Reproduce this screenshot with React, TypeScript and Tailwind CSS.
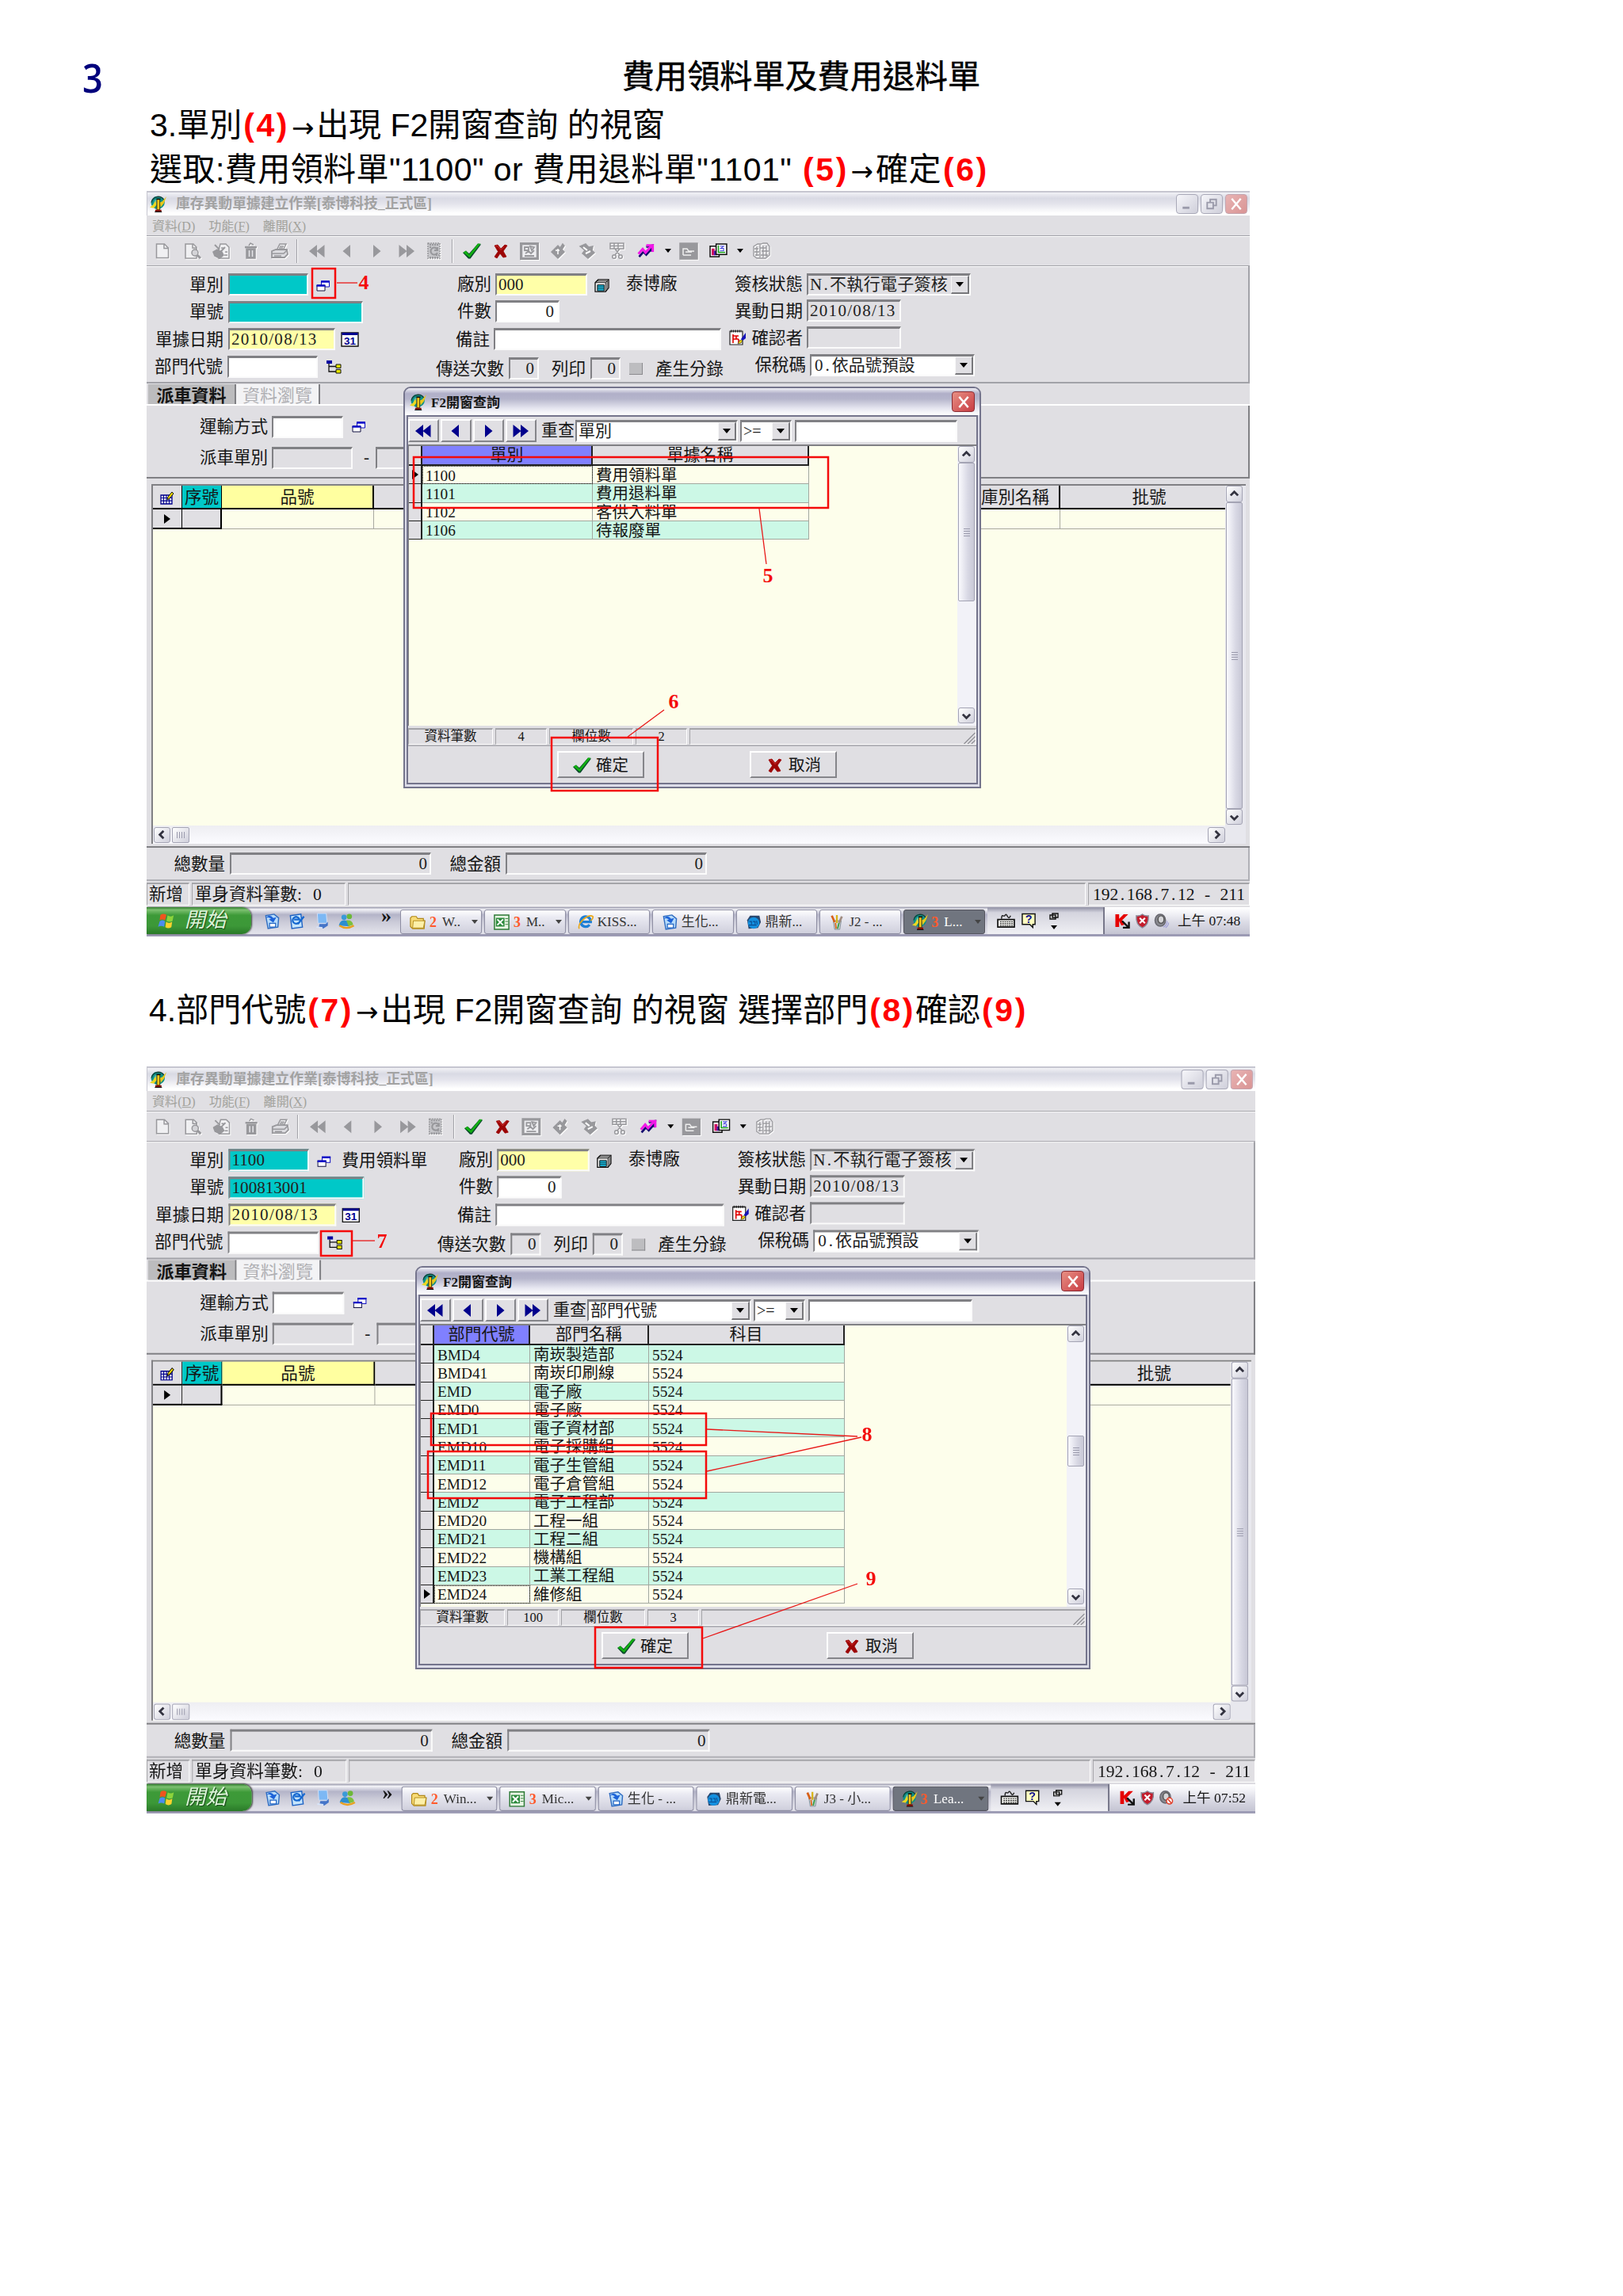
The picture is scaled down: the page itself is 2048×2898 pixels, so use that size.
import React from 'react';
import clsx from 'clsx';

type Row = string[];

const deptRows: Row[] = [
  ['BMD4', '南崁製造部', '5524'],
  ['BMD41', '南崁印刷線', '5524'],
  ['EMD', '電子廠', '5524'],
  ['EMD0', '電子廠', '5524'],
  ['EMD1', '電子資材部', '5524'],
  ['EMD10', '電子採購組', '5524'],
  ['EMD11', '電子生管組', '5524'],
  ['EMD12', '電子倉管組', '5524'],
  ['EMD2', '電子工程部', '5524'],
  ['EMD20', '工程一組', '5524'],
  ['EMD21', '工程二組', '5524'],
  ['EMD22', '機構組', '5524'],
  ['EMD23', '工業工程組', '5524'],
  ['EMD24', '維修組', '5524'],
];

const typeRows: Row[] = [
  ['1100', '費用領料單'],
  ['1101', '費用退料單'],
  ['1102', '客供入料單'],
  ['1106', '待報廢單'],
];

/* ---------- icons ---------- */

function AppIcon({ className = 'h-[21px] w-[21px]' }: { className?: string }) {
  return (
    <svg viewBox="0 0 20 20" preserveAspectRatio="none" className={clsx('shrink-0', className)}>
      <path d="M10 1q6 0 7.500 5T15 14l-3 2H7l-4-3Q0 8 3 4t7-3z" fill="#0f8f86" />
      <path d="M2 8q1-6 8-7 5 0 7 4" fill="none" stroke="#123c34" strokeWidth="1.200" />
      <path d="M6 5l4-1 1 3-4 5-3-1z" fill="#48b8b0" />
      <path d="M0 14l4-3 3-5 1 5-3 4z" fill="#ecd820" />
      <path d="M12 8l3-1 5-6-3 8-4 5z" fill="#e8c81c" />
      <path d="M8.500 4.500h3.500V17H8.500z" fill="#f4c818" stroke="#3a2a08" strokeWidth=".8" />
      <path d="M8 4h5" stroke="#111" strokeWidth="1.400" />
      <path d="M6.500 18h7.500" stroke="#801008" strokeWidth="2.200" />
      <path d="M6 19.500h8.500" stroke="#111" strokeWidth="1" />
    </svg>
  );
}

function LookupIcon() {
  return (
    <svg viewBox="0 0 18 14" className="h-[14px] w-[18px] shrink-0">
      <path d="M6.500 1h10v7h-10z" fill="#fff" stroke="#1010c0" strokeWidth="1" />
      <path d="M6 1.500h11" stroke="#0000c8" strokeWidth="2.400" />
      <path d="M1 6h10v7H1z" fill="#fff" stroke="#101040" strokeWidth="1" />
      <path d="M.5 6.500h11" stroke="#0000c8" strokeWidth="2.400" />
    </svg>
  );
}

function CalendarIcon() {
  return (
    <svg viewBox="0 0 23 19" className="h-[19px] w-[23px] shrink-0">
      <path d="M1 1h21v17H1z" fill="#fff" stroke="#111" strokeWidth="1.400" />
      <path d="M1.500 2.500h20" stroke="#000090" strokeWidth="3" />
      <text x="11.500" y="15.500" textAnchor="middle" fontSize="13.500" fontWeight="700" fill="#000090" fontFamily="Liberation Sans">31</text>
    </svg>
  );
}

function TreeIcon() {
  return (
    <svg viewBox="0 0 20 18" className="h-[18px] w-[20px] shrink-0">
      <path d="M4 5v10h9M4 8.500h9" fill="none" stroke="#111" strokeWidth="1.300" />
      <path d="M1 1h7v4H1z" fill="#0000a0" />
      <path d="M13 6h6v4.500h-6zM13 12.500h6V17h-6z" fill="#e6e600" stroke="#111" strokeWidth="1" />
    </svg>
  );
}

function BoxIcon() {
  return (
    <svg viewBox="0 0 21 18" className="h-[17px] w-[20px] shrink-0">
      <path d="M1 5l4-4h14v11l-4 5H1z" fill="#f4f4f4" stroke="#111" strokeWidth="1.400" />
      <path d="M1 5h14v12M15 5l4-4M3 3h14M17 3v11" fill="none" stroke="#111" strokeWidth="1" />
      <path d="M4 8h9v8H4z" fill="#17b3d6" stroke="#111" strokeWidth="1" />
      <path d="M4 10.500h9M4 13h9" stroke="#111" strokeWidth=".6" />
    </svg>
  );
}

function NoteIcon() {
  return (
    <svg viewBox="0 0 22 20" className="h-[20px] w-[22px] shrink-0">
      <path d="M1 2h16v17H1z" fill="#fff" stroke="#222" strokeWidth="1.200" />
      <path d="M2 2h14" stroke="#222" strokeWidth="3" strokeDasharray="1.5 1.2" />
      <path d="M5 6v11M5 8h7M5 12h7M9 8v4M12 12v5" fill="none" stroke="#e00000" strokeWidth="1.600" />
      <path d="M11 18l2-4 5-2-3 5z" fill="#f5d800" stroke="#222" strokeWidth=".6" />
      <path d="M15 12l6-8v7l-4 3z" fill="#1414b8" />
    </svg>
  );
}

function GridIcon() {
  return (
    <svg viewBox="0 0 18 17" className="h-[17px] w-[18px]">
      <path d="M1 5h14v11H1z" fill="#fff" stroke="#00008c" strokeWidth="1.300" />
      <path d="M1 8.500h14M1 12.200h14M4.500 5v11M8 5v11M11.500 5v11" stroke="#00008c" strokeWidth="1.200" />
      <path d="M9 11l1-4 5-6 2 2-5 6z" fill="#ffe000" stroke="#111" strokeWidth="1" />
    </svg>
  );
}

function CheckIcon() {
  return (
    <svg viewBox="0 0 23 20" className="h-[20px] w-[23px] shrink-0">
      <path d="M0 12l4-2.500L8 13 19 .5l4 1L9.500 19.500H7z" fill="#0a4a2c" />
      <path d="M.5 11.500l3.500-2L8 14.500 19 .5h3.500L8.500 18z" fill="#12b012" />
    </svg>
  );
}

function CrossIcon() {
  return (
    <svg viewBox="0 0 18 18" className="h-[18px] w-[18px] shrink-0">
      <path d="M1 2l4-1 4 5 5-5 3 1-5 7 4 7-4 1-4-5-4 6-3-2 4.500-6.500z" fill="#9c0505" stroke="#9c0505" strokeWidth=".8" />
      <path d="M2.500 3l2-.5 4.500 5 4-4" fill="none" stroke="#d83a3a" strokeWidth=".8" />
    </svg>
  );
}

function Arrow({ dir, double, className }: { dir: 'left' | 'right'; double?: boolean; className: string }) {
  return (
    <svg viewBox="0 0 22 18" className={clsx('h-[18px] w-[22px]', dir === 'right' && 'rotate-180', className)}>
      {double ? <path d="M11 1v16L1 9zM20.500 1v16L10.500 9z" fill="currentColor" /> : <path d="M15 1v16L5.500 9z" fill="currentColor" />}
    </svg>
  );
}

function Gray({ children }: { children: React.ReactNode }) {
  return (
    <svg viewBox="0 0 24 22" className="h-[22px] w-[24px] drop-shadow-[1px_1px_0_#fff]" fill="none" stroke="#98989c" strokeWidth="1.500">
      {children}
    </svg>
  );
}

function Caret() {
  return <span className="inline-block border-x-[4px] border-t-[5px] border-x-transparent border-t-black" />;
}

/* ---------- main window parts ---------- */

function Slot({ w, children }: { w: string; children: React.ReactNode }) {
  return <div className={clsx('flex shrink-0 items-center justify-center', w)}>{children}</div>;
}

function Divider() {
  return <div className="h-[30px] w-[2px] shrink-0 border-l border-[#a0a0a6] border-r-white border-r" />;
}

function Toolbar() {
  return (
    <div className="flex h-[38px] items-center border-b border-[#a2a2a8] pl-[1px] shadow-[0_1px_0_#fff]">
      <Slot w="w-[38px]">
        <Gray><path d="M4.500 2h10l5 5v12.500h-15zM14 2v5.500h5" fill="#f0f0f2" /></Gray>
      </Slot>
      <Slot w="w-[37px]">
        <Gray>
          <path d="M3 2h10l4 4v14H3z" fill="#f0f0f2" />
          <path d="M12 2v5h5" />
          <circle cx="15" cy="13" r="4" fill="#d4d4d8" />
          <path d="M18 16l4 4" strokeWidth="3" />
        </Gray>
      </Slot>
      <Slot w="w-[37px]">
        <Gray>
          <path d="M10 2h7l4 4v14H8V9z" fill="#f0f0f2" />
          <path d="M3 3l6 6M16 6l-8 8" strokeWidth="2" />
          <path d="M1 12l5-3 6 3 2 4-5 4-6-3z" fill="#98989c" />
          <path d="M5 12l5 3M11 7h3M16 12h3M15 16h4" stroke="#98989c" />
        </Gray>
      </Slot>
      <Slot w="w-[36px]">
        <Gray>
          <path d="M7 8h11v12H7z" fill="#98989c" />
          <path d="M5 6h15" strokeWidth="2.500" />
          <path d="M10 4l2-3 4 2" strokeWidth="1.500" />
          <path d="M10.500 10v8M14.500 10v8" stroke="#e6e6ea" />
        </Gray>
      </Slot>
      <Slot w="w-[37px]">
        <Gray>
          <path d="M8 10l4-8h8l-4 8z" fill="#f0f0f2" />
          <path d="M2 11l5-2h14l1 6-4 4H2z" fill="#dcdce0" strokeWidth="1.800" />
          <path d="M2 14h15l4-4M5 17h9M12 5h5M11 7h5" />
        </Gray>
      </Slot>
      <Slot w="w-[8px]"><Divider /></Slot>
      <Slot w="w-[42px]"><Arrow dir="left" double className="text-[#98989c]" /></Slot>
      <Slot w="w-[33px]"><Arrow dir="left" className="text-[#98989c]" /></Slot>
      <Slot w="w-[42px]"><Arrow dir="right" className="text-[#98989c]" /></Slot>
      <Slot w="w-[34px]"><Arrow dir="right" double className="text-[#98989c]" /></Slot>
      <Slot w="w-[36px]">
        <Gray><path d="M4 1h15v19H4z" fill="#c6c6ca" strokeDasharray="2 1" /><path d="M16 9a4.500 4.500 0 1 0 0 4M16 6v4h-4" strokeWidth="2.200" /><path d="M6 3h11M6 19h11M6 6h3M14 16h4" strokeWidth="2" strokeDasharray="2 1" /></Gray>
      </Slot>
      <Slot w="w-[10px]"><Divider /></Slot>
      <Slot w="w-[39px]"><CheckIcon /></Slot>
      <Slot w="w-[33px]"><CrossIcon /></Slot>
      <Slot w="w-[39px]">
        <Gray><path d="M1.500 1.500h21v19h-21z" fill="#ededf0" strokeWidth="3.500" /><path d="M6 6h5v4H6zM13 5l5 1-3 4zM7 14l4-3 3 3 4-4M6 17h12" strokeWidth="1.800" /></Gray>
      </Slot>
      <Slot w="w-[35px]">
        <Gray><path d="M3 12l8-8 8 8-8 8zM14 7l3-5 2 2-3 5" fill="#98989c" /><path d="M8 10h5M11 8v7" stroke="#fff" /></Gray>
      </Slot>
      <Slot w="w-[37px]">
        <Gray><path d="M3 5l7-3 4 4 5-1-1 5 3 3-8 7-7-6 3-4z" fill="#98989c" /><path d="M7 6l5 4M10 14l6-3" stroke="#fff" strokeWidth="2" /></Gray>
      </Slot>
      <Slot w="w-[38px]">
        <Gray><path d="M4 1h17v7H4zM4 4.500h17M9 1v7M14 1v7M10 8l6 8M16 8l-6 8" /><circle cx="9" cy="18" r="2.300" /><circle cx="17" cy="18" r="2.300" /></Gray>
      </Slot>
      <Slot w="w-[37px]">
        <svg viewBox="0 0 24 20" className="h-[18px] w-[23px]">
          <path d="M2 18l6-7 4 4 9-10M12 4l9-2-1 9" fill="none" stroke="#140a6e" strokeWidth="3" />
          <path d="M1 14l6-7 4 5 9-10M12 2h9v9" fill="none" stroke="#f218e8" strokeWidth="3.400" />
        </svg>
      </Slot>
      <Slot w="w-[17px]"><Caret /></Slot>
      <Slot w="w-[36px]">
        <Gray><path d="M1 1h22v20H1z" fill="#98989c" /><path d="M5 16V8h5l2 3h7M5 16h10M8 12h8" stroke="#eee" /></Gray>
      </Slot>
      <Slot w="w-[38px]">
        <svg viewBox="0 0 24 20" className="h-[19px] w-[23px]">
          <path d="M1 4h12v14H1z" fill="#fff" stroke="#111" strokeWidth="1.600" />
          <path d="M3 7h4v9H3z" fill="#d01060" />
          <path d="M6 10h4v6H6z" fill="#5018b0" />
          <path d="M9 1h14v14H9z" fill="#fff" stroke="#111" strokeWidth="1.600" />
          <path d="M12 3v9h9" fill="none" stroke="#12a012" strokeWidth="1.600" />
          <path d="M14 4h5l-4 3h4v3h-5" fill="none" stroke="#5050e0" strokeWidth="1.200" />
        </svg>
      </Slot>
      <Slot w="w-[18px]"><Caret /></Slot>
      <Slot w="w-[35px]">
        <Gray><path d="M2 5l5-3h4l3-1h5l3 4v11l-5 4H6l-4-3zM6 5v12M10 3v16M14 4v15M18 4v14M3 8h5M10 7h8M3 12h6M12 11h9M4 16h5M11 16h9" strokeWidth="1.300" /></Gray>
      </Slot>
    </div>
  );
}

function Field({ className, children }: { className: string; children?: React.ReactNode }) {
  return (
    <div
      className={clsx(
        'flex h-[28px] shrink-0 items-center overflow-hidden whitespace-nowrap border-[2px] border-t-[3px] border-[#808084] border-b-[#fbfbfb] border-r-[#fbfbfb] px-[2px] text-[21px] leading-none text-[#222]',
        className,
      )}
    >
      {children}
    </div>
  );
}

function ComboButton() {
  return (
    <div className="ml-auto -mr-[2px] flex h-full w-[23px] shrink-0 items-center justify-center border-r-2 border-b-2 border-l border-t border-[#77777b] border-l-[#f8f8f8] border-t-[#f8f8f8] bg-[#e0dfe3]">
      <span className="inline-block border-x-[5px] border-t-[6px] border-x-transparent border-t-black" />
    </div>
  );
}

function Label({ w, children }: { w: string; children: React.ReactNode }) {
  return <div className={clsx('shrink-0 whitespace-nowrap pt-[3px] text-right text-[21.500px] leading-none', w)}>{children}</div>;
}

function FormPanel({ code, number, codeName }: { code?: string; number?: string; codeName?: string }) {
  return (
    <div className="flex h-[148px] border-b-2 border-r-2 border-[#a2a2a8] pt-[6px]">
      <div className="w-[360px] shrink-0">
        <div className="flex h-[34px] items-center">
          <Label w="w-[97px]">單別</Label>
          <Field className="ml-[6px] w-[101px] bg-[#00c8c8]">{code}</Field>
          <div className="ml-[10px] flex pt-[3px]"><LookupIcon /></div>
          <span className="ml-[13px] whitespace-nowrap pt-[3px] text-[21.500px] leading-none">{codeName}</span>
        </div>
        <div className="flex h-[35px] items-center">
          <Label w="w-[97px]">單號</Label>
          <Field className="ml-[6px] w-[170px] bg-[#00c8c8]">{number}</Field>
        </div>
        <div className="flex h-[34px] items-center">
          <Label w="w-[97px]">單據日期</Label>
          <Field className="ml-[6px] w-[135px] bg-[#ffffa8] tracking-[1.300px]">2010/08/13</Field>
          <div className="ml-[7px]"><CalendarIcon /></div>
        </div>
        <div className="flex h-[35px] items-center">
          <Label w="w-[96px]">部門代號</Label>
          <Field className="ml-[6px] w-[114px] bg-white" />
          <div className="ml-[10px]"><TreeIcon /></div>
        </div>
      </div>
      <div className="w-[375px] shrink-0">
        <div className="flex h-[33px] items-center">
          <Label w="w-[75px]">廠別</Label>
          <Field className="ml-[5px] w-[116px] bg-[#ffffa8]">000</Field>
          <div className="ml-[9px] pt-[3px]"><BoxIcon /></div>
          <span className="ml-[20px] whitespace-nowrap text-[21.500px] leading-none">泰博廠</span>
        </div>
        <div className="flex h-[35px] items-center">
          <Label w="w-[75px]">件數</Label>
          <Field className="ml-[5px] w-[81px] justify-end bg-white pr-[5px]">0</Field>
        </div>
        <div className="flex h-[36px] items-center">
          <Label w="w-[73px]">備註</Label>
          <Field className="ml-[5px] w-[287px] bg-white" />
        </div>
        <div className="flex h-[38px] items-center">
          <Label w="w-[91px]">傳送次數</Label>
          <Field className="ml-[6px] w-[38px] justify-end pr-[4px]">0</Field>
          <Label w="w-[59px]">列印</Label>
          <Field className="ml-[6px] w-[38px] justify-end pr-[4px]">0</Field>
          <div className="ml-[11px] h-[15px] w-[17px] border-b border-r border-[#8a8a8e] bg-[#bdbdc0]" />
          <Label w="w-[102px]">產生分錄</Label>
        </div>
      </div>
      <div>
        <div className="flex h-[33px] items-center">
          <Label w="w-[93px]">簽核狀態</Label>
          <Field className="ml-[5px] w-[207px]"><span className="tracking-[.3px]">N<span className="mx-[2px]">.</span>不執行電子簽核</span><ComboButton /></Field>
        </div>
        <div className="flex h-[34px] items-center">
          <Label w="w-[93px]">異動日期</Label>
          <Field className="ml-[5px] w-[119px] tracking-[1.300px]">2010/08/13</Field>
        </div>
        <div className="flex h-[34px] items-center">
          <div><NoteIcon /></div>
          <Label w="w-[71px]">確認者</Label>
          <Field className="ml-[5px] w-[119px]" />
        </div>
        <div className="flex h-[35px] items-center">
          <Label w="w-[97px]">保稅碼</Label>
          <Field className="ml-[5px] w-[208px] bg-white"><span className="ml-[2px]">0<span className="mx-[3px]">.</span>依品號預設</span><ComboButton /></Field>
        </div>
      </div>
    </div>
  );
}

function CaptionButton({ kind }: { kind: 'min' | 'max' | 'close' }) {
  return (
    <div
      className={clsx(
        'flex h-[25px] w-[28px] items-center justify-center rounded-[4px] border',
        kind === 'close' ? 'border-[#c4a4ae] bg-[linear-gradient(135deg,#e8b4b4,#d99494)]' : 'border-[#a9a9b8] bg-[linear-gradient(135deg,#f6f6fa,#cfcfda)]',
      )}
    >
      <svg viewBox="0 0 20 20" className="h-[19px] w-[20px]" fill="none" stroke={kind === 'close' ? '#fff' : '#9a9aaa'} strokeWidth="2">
        {kind === 'min' && <path d="M4 15h9" strokeWidth="3" />}
        {kind === 'max' && <path d="M4 8h8v8H4zM8 8V4h8v8h-3" />}
        {kind === 'close' && <path d="M4 3l12 14M16 3L4 17" strokeWidth="2.500" />}
      </svg>
    </div>
  );
}

function ScrollButton({ dir, className = 'h-[20px] w-[22px]' }: { dir: 'up' | 'down' | 'left' | 'right'; className?: string }) {
  const paths = { up: 'M3 10l5-5 5 5', down: 'M3 6l5 5 5-5', left: 'M10 3L5 8l5 5', right: 'M6 3l5 5-5 5' };
  return (
    <div className={clsx('flex shrink-0 items-center justify-center rounded-[3px] border border-[#a4a4b4] bg-[linear-gradient(135deg,#fff,#cfcfdb)]', className)}>
      <svg viewBox="0 0 16 16" className="h-[15px] w-[15px]" fill="none" stroke="#333340" strokeWidth="3"><path d={paths[dir]} /></svg>
    </div>
  );
}

function VThumb({ className }: { className: string }) {
  return (
    <div className={clsx('flex w-[21px] shrink-0 flex-col items-center justify-center gap-[2px] rounded-[2px] border border-[#a4a4b4] bg-[linear-gradient(to_right,#fafafe,#d8d8e4_60%,#c8c8d6)]', className)}>
      {[0, 1, 2, 3].map((i) => <div key={i} className="h-px w-[8px] bg-[#9a9aac]" />)}
    </div>
  );
}

function DetailGrid() {
  return (
    <div className="h-[466px] border-b-2 border-[#808084] pl-[6px] pr-[5px] pt-[7px]">
      <div className="flex h-[454px] border-l-2 border-t-2 border-[#808084] bg-[#fdfeeb]">
        <div className="flex min-w-0 flex-1 flex-col">
          <div className="flex h-[30px] text-[21.500px] leading-none">
            <div className="flex w-[37px] items-center justify-center border-b-2 border-r border-black bg-[#e0dfe3] pt-[3px]"><GridIcon /></div>
            <div className="flex w-[50px] items-center justify-center border-b-2 border-r border-black bg-[#00c8c8] pt-[3px]">序號</div>
            <div className="flex w-[192px] items-center justify-center border-b-2 border-r-2 border-black bg-[#ffffa0] pt-[3px]">品號</div>
            <div className="w-[760px] border-b-2 border-black bg-[#e0dfe3]" />
            <div className="flex w-[106px] items-center justify-end border-b-2 border-r-2 border-black bg-[#e0dfe3] pr-[12px] pt-[3px]">庫別名稱</div>
            <div className="flex flex-1 items-center justify-center border-b-2 border-black bg-[#e0dfe3] pl-[16px] pt-[3px]">批號</div>
          </div>
          <div className="flex h-[25px]">
            <div className="flex w-[37px] items-center justify-center border-b-2 border-r border-black bg-[#e0dfe3]">
              <span className="inline-block border-y-[6px] border-l-[8px] border-y-transparent border-l-black" />
            </div>
            <div className="w-[50px] border-b-2 border-r-2 border-black bg-[#e0dfe3]" />
            <div className="w-[192px] border-b border-r border-[#a8a8a0]" />
            <div className="w-[866px] border-b border-r border-[#a8a8a0]" />
            <div className="flex-1 border-b border-[#a8a8a0]" />
          </div>
          <div className="flex-1" />
          <div className="flex h-[23px] items-center gap-[2px] bg-[linear-gradient(#eeeef2,#fbfbff)] pl-px">
            <ScrollButton dir="left" className="h-[20px] w-[21px]" />
            <div className="flex h-[20px] w-[22px] items-center justify-center gap-[2px] rounded-[2px] border border-[#a4a4b4] bg-[linear-gradient(135deg,#fff,#cfcfdb)]">
              {[0, 1, 2, 3].map((i) => <div key={i} className="h-[8px] w-px bg-[#9a9aac]" />)}
            </div>
            <div className="flex-1" />
            <ScrollButton dir="right" className="h-[20px] w-[22px]" />
          </div>
        </div>
        <div className="flex w-[26px] flex-col bg-[#e8e8ee] pl-px">
          <ScrollButton dir="up" className="h-[21px] w-[21px]" />
          <VThumb className="flex-1" />
          <ScrollButton dir="down" className="mb-[24px] h-[20px] w-[21px]" />
        </div>
      </div>
    </div>
  );
}

function StatusCell({ className, children }: { className: string; children?: React.ReactNode }) {
  return (
    <div className={clsx('flex items-center whitespace-nowrap border border-t-2 border-[#a4a4a8] border-b-white border-r-white leading-none', className)}>
      {children}
    </div>
  );
}

/* ---------- taskbar ---------- */

type Task = { icon: 'folder' | 'excel' | 'ie' | 'sync' | 'globe' | 'paint' | 'app'; count?: string; title: string; menu?: boolean };

function SyncIcon() {
  return (
    <svg viewBox="0 0 22 22" className="h-[21px] w-[22px] shrink-0">
      <path d="M3 4l11-2 6 5-1 12-13 2z" fill="#b8dcfa" stroke="#2f6cc0" strokeWidth="1.500" />
      <path d="M3 7q5-6 10 0l4-1-4 7-6-4 3-1q-3-3-7-1z" fill="#1c62d8" />
      <path d="M8 14h8v5H8z" fill="#fff" stroke="#1f63c4" strokeWidth="1.300" />
    </svg>
  );
}

function TaskIcon({ icon }: { icon: Task['icon'] }) {
  if (icon === 'app') return <AppIcon className="h-[21px] w-[20px]" />;
  if (icon === 'sync') return <SyncIcon />;
  return (
    <svg viewBox="0 0 22 22" className="h-[20px] w-[22px] shrink-0">
      {icon === 'folder' && <path d="M1 5l2-2h6l2 3h8v3h2l-1 11H4L1 17z" fill="#f8dc78" stroke="#b08818" strokeWidth="1.300" />}
      {icon === 'folder' && <path d="M5 9h16l-2 10H4z" fill="#fdf0a8" stroke="#b08818" />}
      {icon === 'excel' && (
        <>
          <path d="M1 1h20v20H1z" fill="#e8f4e4" stroke="#2c7a34" strokeWidth="1.600" />
          <path d="M3 5h12v12H3z" fill="#2c8a3c" />
          <path d="M5 7l8 8M13 7l-8 8" stroke="#fff" strokeWidth="2.200" />
          <path d="M16 6h4M16 10h4M16 14h4" stroke="#2c7a34" />
        </>
      )}
      {icon === 'ie' && (
        <>
          <path d="M16.500 14.500A7 7 0 1 1 18 10.500H6" fill="none" stroke="#1d7fd6" strokeWidth="3.600" />
          <path d="M2 20Q0 14 8 7t13-4q1 3-3 6" fill="none" stroke="#e8a818" strokeWidth="1.800" />
        </>
      )}
      {icon === 'globe' && (
        <>
          <path d="M2 8l4-6h13l2 9-4 8-13 1z" fill="#28466e" />
          <circle cx="11" cy="12" r="8" fill="#1490e0" />
          <path d="M5 10h3v4M10 10h3v4M15 9l1 5M4 15h11" fill="none" stroke="#0b4c90" strokeWidth="1.200" />
        </>
      )}
      {icon === 'paint' && (
        <>
          <path d="M6 9h11l-2 12H8z" fill="#cfd8dc" stroke="#7a8890" />
          <path d="M8 11L4 2" stroke="#d86018" strokeWidth="3" />
          <path d="M11 12V1" stroke="#d8b418" strokeWidth="2.500" />
          <path d="M14 12l4-9" stroke="#a08c80" strokeWidth="3" />
          <path d="M9 12l1 8" stroke="#e06a20" strokeWidth="2" />
          <path d="M14 12l-2 8" stroke="#3a9c48" strokeWidth="2" />
        </>
      )}
    </svg>
  );
}

function Taskbar({ tasks, time, wide }: { tasks: Task[]; time: string; wide?: boolean }) {
  return (
    <div className="flex h-[37px] items-stretch border-b-[3px] border-[#9c9bb4] bg-[linear-gradient(#8f8fa4_0%,#f4f4f8_8%,#b4b4c8_28%,#cbcbd8_55%,#e4e4ec_100%)]">
      <div className="flex w-[132px] items-center rounded-r-[12px] bg-[linear-gradient(#2f7a2c_0%,#7cc070_10%,#3d9a38_30%,#3c9838_70%,#2a7a28_100%)] pl-[14px] shadow-[1px_0_2px_#444]">
        <svg viewBox="0 0 24 22" className="h-[21px] w-[24px] shrink-0">
          <path d="M3 3q4-3 8 0L9 10q-4-2-7 0z" fill="#f0541e" />
          <path d="M12.500 3.500q4 3 8 0L19 11q-4 2-8 0z" fill="#8cd43c" />
          <path d="M2 11.500q4-3 7 0l-1 7q-4-2-8 0z" fill="#4c8cf0" />
          <path d="M10.500 12q4 3 8 0l-1 7q-4 3-8 0z" fill="#fcd22c" />
        </svg>
        <span className="ml-[10px] whitespace-nowrap text-[26px] italic leading-none tracking-[.5px] text-[#dcf4d8] [text-shadow:1px_1px_1px_#1c4a1c]">開始</span>
      </div>
      <div className="flex w-[188px] shrink-0 items-center pl-[15px]">
        <SyncIcon />
        <svg viewBox="0 0 22 22" className="ml-[9px] h-[21px] w-[22px] shrink-0">
          <path d="M3 4l14-2 2 17-14 2z" fill="#c4e4fc" stroke="#1f63c4" strokeWidth="1.500" />
          <path d="M14 13a4.500 4.500 0 1 1 1-4H8M13 15l8-10" fill="none" stroke="#1668d0" strokeWidth="2.400" />
        </svg>
        <svg viewBox="0 0 22 22" className="ml-[11px] h-[21px] w-[22px] shrink-0">
          <path d="M4 1h12l1 13H5z" fill="#7cb8f4" stroke="#d4e0f4" />
          <path d="M7 15h8l3-3v5l-6 4-6-2z" fill="#4474c8" />
          <path d="M3 19l8 1" stroke="#d8e4f8" strokeWidth="2" />
        </svg>
        <svg viewBox="0 0 22 22" className="ml-[8px] h-[21px] w-[22px] shrink-0">
          <circle cx="8" cy="6" r="3.500" fill="#3a9ad8" />
          <circle cx="15" cy="5" r="3.500" fill="#6cb838" />
          <path d="M1 17q2-8 8-7t6 8z" fill="#2c8ed0" />
          <path d="M11 10q8-1 9 6l-6 2z" fill="#7cc040" />
          <path d="M2 17q9 6 19 0" fill="none" stroke="#e8a020" strokeWidth="2.500" />
        </svg>
        <span className="mb-[12px] ml-[33px] text-[26px] font-bold leading-none">»</span>
      </div>
      <div className="flex items-center gap-[3px] pt-[3px]">
        {tasks.map((t) => (
          <div
            key={t.title}
            className={clsx(
              'flex h-[31px] items-center overflow-hidden whitespace-nowrap rounded-[3px] border pl-[10px] pr-[4px] text-[17px] leading-none',
              wide ? 'w-[120.400px]' : 'w-[102.900px]',
              t.icon === 'app' ? 'border-[#54545f] bg-[#70757f] text-white' : 'border-[#8d8da2] bg-[linear-gradient(#fff,#eaeaf2_30%,#cfcfdc)] text-[#333]',
            )}
          >
            <TaskIcon icon={t.icon} />
            {t.count && <span className="ml-[4px] text-[18px] font-bold text-[#ff5a2c]">{t.count}</span>}
            <span className={t.count ? 'ml-[7px]' : 'ml-[4px]'}>{t.title}</span>
            {t.menu && <span className="ml-auto border-x-[4px] border-t-[5px] border-x-transparent border-t-[#444]" />}
          </div>
        ))}
      </div>
      <div className="ml-[3px] flex flex-1 items-center gap-[8px] bg-[linear-gradient(#8f8fa4_0%,#d4d4de_20%,#f0f0f4_100%)] pl-[12px]">
        <svg viewBox="0 0 24 20" className="h-[19px] w-[23px]">
          <path d="M6 7q0-5 2-4t3-1 3 2 4-1" fill="none" stroke="#222" strokeWidth="1.500" />
          <path d="M1 8h22v10H1z" fill="#f4f4f0" stroke="#111" strokeWidth="1.800" />
          <path d="M4 11h17M4 13.500h17M4 16h17" stroke="#222" strokeWidth="1.200" strokeDasharray="2 1" />
        </svg>
        <svg viewBox="0 0 20 20" className="h-[20px] w-[19px]">
          <path d="M1 1h17v14h-3v4l-4-4H1z" fill="#ffffc0" stroke="#111" strokeWidth="1.500" />
          <text x="9.500" y="13.500" textAnchor="middle" fontSize="15" fontWeight="700" fill="#101090" fontFamily="Liberation Sans">?</text>
        </svg>
        <div className="ml-[8px] flex flex-col items-center gap-[7px]">
          <svg viewBox="0 0 12 9" className="h-[9px] w-[12px]" fill="#ddd" stroke="#111" strokeWidth="1.400"><path d="M4 1h7v5H4zM1 3h7v5H1z" /></svg>
          <Caret />
        </div>
      </div>
      <div className="flex w-[185px] shrink-0 items-center border-l-2 border-[#77778a] bg-[linear-gradient(#fff_0%,#f4f4f8_20%,#dcdce6_55%,#c4c4d2_100%)] pl-[12px]">
        <svg viewBox="0 0 20 20" className="h-[19px] w-[20px] shrink-0">
          <path d="M1 1h5v6l6-6h6l-8 8 3 6-4 1-3-6v8H1z" fill="#e60000" />
          <path d="M10 10l9 9v-8M19 19h-8" fill="none" stroke="#111" strokeWidth="2.500" />
        </svg>
        <svg viewBox="0 0 20 20" className="ml-[6px] h-[19px] w-[19px] shrink-0">
          <path d="M10 1q4 3 8 2 1 12-8 16Q1 15 2 3q4 1 8-2z" fill="#c41c2c" stroke="#8a8a98" strokeWidth="1.500" />
          <path d="M6.500 6l7 7M13.500 6l-7 7" stroke="#fff" strokeWidth="2.300" />
        </svg>
        <svg viewBox="0 0 20 20" className="ml-[5px] h-[19px] w-[20px] shrink-0">
          <ellipse cx="8" cy="9" rx="7" ry="8" fill="#88888f" stroke="#66666e" strokeWidth="1.500" />
          <ellipse cx="9" cy="8" rx="4" ry="5" fill="#d4d4d8" stroke="#555" strokeWidth="1.500" />
          {wide ? (
            <path d="M9.500 14a4 4 0 1 0 8 0 4 4 0 1 0-8 0M11 11l5 6" fill="#fff" stroke="#e0402c" strokeWidth="1.600" />
          ) : (
            <path d="M12 18q5-2 5-8M15 19q4-3 4-7" fill="none" stroke="#a0a0d8" strokeWidth="1.300" />
          )}
        </svg>
        <span className="ml-[10px] whitespace-nowrap pt-[2px] text-[17.500px] leading-none">上午 {time}</span>
      </div>
    </div>
  );
}

function Dot() {
  return <span className="mx-[2.600px]">.</span>;
}

type MainProps = { code?: string; number?: string; codeName?: string; tasks: Task[]; time: string; wide?: boolean };

function MainWindow({ code, number, codeName, tasks, time, wide }: MainProps) {
  return (
    <div className={clsx('flex h-[941px] w-[1392px] origin-top-left flex-col bg-[#e0dfe3] text-[#151515]', wide && 'scale-x-[1.005] scale-y-[1.002]')}>
      <div className="flex h-[31px] items-center border-l border-t-2 border-[#c6c6d0] bg-[linear-gradient(#f2f2f6_0%,#d9dae4_25%,#e4e4ec_50%,#ffffff_90%)] pl-[3px] pr-[3px]">
        <AppIcon />
        <span className="ml-[12px] whitespace-nowrap text-[17.800px] font-bold leading-none text-[#a2a2a2]">庫存異動單據建立作業[泰博科技_正式區]</span>
        <div className="ml-auto flex gap-[3px]">
          <CaptionButton kind="min" />
          <CaptionButton kind="max" />
          <CaptionButton kind="close" />
        </div>
      </div>
      <div className="flex h-[26px] items-center gap-[17px] border-b border-[#a2a2a8] pl-[7px] pt-[2px] text-[16px] leading-none text-[#a2a29c] shadow-[0_1px_0_#fff]">
        <span>資料(<u>D</u>)</span>
        <span>功能(<u>F</u>)</span>
        <span>離開(<u>X</u>)</span>
      </div>
      <Toolbar />
      <FormPanel code={code} number={number} codeName={codeName} />
      <div className="flex h-[28px] items-end border-b-2 border-white pl-[2px] text-[22px] leading-none">
        <div className="flex h-[25px] w-[111px] items-center justify-center border-r-2 border-[#808084] bg-[#bcbcbe] pt-[4px] font-bold">派車資料</div>
        <div className="flex h-[25px] w-[106px] items-center justify-center border-r-2 border-[#808084] bg-[#f3f3f5] pt-[4px] text-[#b0b0b4]">資料瀏覽</div>
      </div>
      <div className="h-[92px] border-b-2 border-r-2 border-[#808084] pt-[7px]">
        <div className="flex h-[39px] items-center">
          <Label w="w-[153px]">運輸方式</Label>
          <Field className="ml-[5px] w-[90px] bg-white" />
          <div className="ml-[11px]"><LookupIcon /></div>
        </div>
        <div className="flex h-[39px] items-center">
          <Label w="w-[153px]">派車單別</Label>
          <Field className="ml-[5px] w-[102px]" />
          <span className="ml-[14px] w-[15px] text-[21px] leading-none">-</span>
          <Field className="w-[160px]" />
        </div>
      </div>
      <DetailGrid />
      <div className="flex h-[42px] items-center border-b-2 border-r-2 border-[#b0b0b6]">
        <Label w="w-[99px]">總數量</Label>
        <Field className="ml-[6px] w-[254px] justify-end pr-[3px]">0</Field>
        <Label w="w-[88px]">總金額</Label>
        <Field className="ml-[6px] w-[254px] justify-end pr-[3px]">0</Field>
      </div>
      <div className="flex h-[33px] gap-[3px] pb-[2px] pt-[2px] text-[21.500px]">
        <StatusCell className="w-[54px] pl-[2px] pt-[2px]">新增</StatusCell>
        <StatusCell className="w-[194px] pl-[3px] pt-[2px]">單身資料筆數:<span className="ml-[14px]">0</span></StatusCell>
        <StatusCell className="flex-1" />
        <StatusCell className="w-[204px] justify-center whitespace-pre pt-[2px]">
          192<Dot />168<Dot />7<Dot />12<span className="mx-[12.500px]">-</span>211
        </StatusCell>
      </div>
      <Taskbar tasks={tasks} time={time} wide={wide} />
    </div>
  );
}

/* ---------- F2 lookup dialog ---------- */

type DialogProps = {
  className: string;
  field: string;
  fieldWidth: string;
  columns: { title: string; w: string }[];
  rows: Row[];
  current: number;
  mintFirst?: boolean;
  count: string;
  fieldCount: string;
  okMargin: string;
  cancelMargin: string;
  thumb: string;
};

function LookupDialog(p: DialogProps) {
  return (
    <div className={clsx('absolute flex flex-col rounded-t-[9px] border-2 border-[#74748c] bg-[#dcdce8] text-[#151515]', p.className)}>
      <div className="flex h-[34px] shrink-0 items-center rounded-t-[7px] bg-[linear-gradient(#f0f0f6_0%,#b0afc8_20%,#b6b6cc_40%,#e6e6f0_75%,#ffffff_100%)] pl-[6px] pr-[6px]">
        <AppIcon />
        <span className="ml-[6px] whitespace-nowrap pt-[2px] text-[17px] font-bold leading-none">F2開窗查詢</span>
        <div className="ml-auto flex h-[26px] w-[29px] items-center justify-center rounded-[4px] border border-[#8a2c34] bg-[linear-gradient(135deg,#e89084,#c83c44)]">
          <svg viewBox="0 0 20 20" className="h-[19px] w-[20px]"><path d="M4 3l12 14M16 3L4 17" stroke="#fff" strokeWidth="2.600" /></svg>
        </div>
      </div>
      <div className="mx-[2px] mb-[3px] flex min-h-0 flex-1 flex-col border-2 border-[#74748c] bg-[#e0dfe3]">
        <div className="flex h-[37px] shrink-0 items-center border-b-2 border-[#808084]">
          <div className="flex gap-[2px]">
            {(['left', 'left', 'right', 'right'] as const).map((d, i) => (
              <div key={i} className="flex h-[29px] w-[39px] shrink-0 items-center justify-center border-2 border-[#85858a] border-l-white border-t-white pr-[2px]">
                <Arrow dir={d} double={i === 0 || i === 3} className="text-[#00008c]" />
              </div>
            ))}
          </div>
          <span className="ml-[6px] w-[43px] shrink-0 whitespace-nowrap text-[21px] leading-none">重查</span>
          <Field className={clsx('bg-white', p.fieldWidth)}>{p.field}<ComboButton /></Field>
          <Field className="ml-[3px] w-[65px] bg-white"><span className="text-[20px]">&gt;=</span><ComboButton /></Field>
          <Field className={clsx('ml-[4px] bg-white', p.fieldWidth)} />
        </div>
        <div className="flex min-h-0 flex-1 border-l border-[#808084] bg-[#fdfeeb]">
          <div className="min-w-0 flex-1 text-[21px] leading-none">
            <div className="flex h-[25px]">
              <div className="w-[17px] shrink-0 border-b-2 border-r-2 border-[#222] bg-[#e0dfe3]" />
              {p.columns.map((c, i) => (
                <div key={c.title} className={clsx('flex shrink-0 items-center justify-center border-b-2 border-r-2 border-[#222]', c.w, i === 0 ? 'bg-[#8080ff]' : 'bg-[#e0dfe3]')}>
                  {c.title}
                </div>
              ))}
            </div>
            {p.rows.map((r, i) => (
              <div key={r[0]} className="flex h-[23.300px]">
                <div className="flex w-[17px] shrink-0 items-center justify-center border-b border-r-2 border-[#222] bg-[#e0dfe3]">
                  {i === p.current && <span className="inline-block border-y-[6px] border-l-[8px] border-y-transparent border-l-black" />}
                </div>
                {p.columns.map((c, j) => (
                  <div
                    key={c.title}
                    className={clsx(
                      'flex shrink-0 items-center whitespace-nowrap border-b border-r border-[#a2a8a0] pl-[4px] pt-[2px]',
                      c.w,
                      (i % 2 === 0) === !!p.mintFirst ? 'bg-[#ccf8e6]' : 'bg-[#fdfeeb]',
                      i === p.current && j === 0 && 'outline-dotted outline-1 -outline-offset-1 outline-black',
                    )}
                  >
                    <span className={j === 1 ? 'text-[20.500px]' : 'text-[19.300px]'}>{r[j]}</span>
                  </div>
                ))}
              </div>
            ))}
          </div>
          <div className="flex w-[24px] shrink-0 flex-col bg-[#f2f2f8] pl-px">
            <ScrollButton dir="up" className="h-[21px] w-[21px]" />
            <VThumb className={p.thumb} />
            <ScrollButton dir="down" className="mb-[3px] mt-auto h-[20px] w-[21px]" />
          </div>
        </div>
        <div className="flex h-[26px] shrink-0 gap-[3px] border-b-2 border-[#b4b4ba] pt-[3px] text-[16.500px]">
          <StatusCell className="w-[107px] justify-center">資料筆數</StatusCell>
          <StatusCell className="w-[65px] justify-center">{p.count}</StatusCell>
          <StatusCell className="w-[106px] justify-center">欄位數</StatusCell>
          <StatusCell className="w-[65px] justify-center">{p.fieldCount}</StatusCell>
          <StatusCell className="flex-1 items-end justify-end">
            <svg viewBox="0 0 16 16" className="h-[15px] w-[16px]" stroke="#8a8a90" strokeWidth="1.300"><path d="M1 16L16 1M6 16L16 6M11 16l5-5" /></svg>
          </StatusCell>
        </div>
        <div className="flex h-[46px] shrink-0 items-center text-[20.500px] leading-none">
          <div className={clsx('flex h-[34px] w-[110px] items-center justify-center gap-[6px] border-2 border-[#85858a] border-l-white border-t-white pt-[2px]', p.okMargin)}>
            <CheckIcon />確定
          </div>
          <div className={clsx('flex h-[34px] w-[110px] items-center justify-center gap-[8px] border-2 border-[#85858a] border-l-white border-t-white pl-[3px] pt-[2px]', p.cancelMargin)}>
            <CrossIcon />取消
          </div>
        </div>
      </div>
    </div>
  );
}

/* red call-outs drawn on top of a window */
type Mark = { text: string; x: number; y: number };

function Callouts({ boxes, lines, marks }: { boxes: number[][]; lines: number[][]; marks: Mark[] }) {
  return (
    <svg viewBox="0 0 1400 944" className="pointer-events-none absolute left-0 top-0 h-[944px] w-[1400px]">
      {boxes.map((b, i) => (
        <rect key={i} x={b[0]} y={b[1]} width={b[2] - b[0]} height={b[3] - b[1]} fill="none" stroke="#f40b0b" strokeWidth="2.500" />
      ))}
      {lines.map((l, i) => (
        <line key={i} x1={l[0]} y1={l[1]} x2={l[2]} y2={l[3]} stroke="#e81818" strokeWidth="1.300" />
      ))}
      {marks.map((m) => (
        <text key={m.text} x={m.x} y={m.y} textAnchor="middle" fontSize="26" fontWeight="700" fill="#f40b0b" fontFamily="Liberation Serif">{m.text}</text>
      ))}
    </svg>
  );
}

function Red({ children }: { children: React.ReactNode }) {
  return <b className="pl-[2px] tracking-[2.600px] text-[#ff0000]">{children}</b>;
}

function To() {
  return <span className="flex w-[34px] justify-center pt-[4px] font-['DejaVu_Sans',sans-serif] text-[34px]">→</span>;
}

const tasks1: Task[] = [
  { icon: 'folder', count: '2', title: 'W..', menu: true },
  { icon: 'excel', count: '3', title: 'M..', menu: true },
  { icon: 'ie', title: 'KISS...' },
  { icon: 'sync', title: '生化...' },
  { icon: 'globe', title: '鼎新...' },
  { icon: 'paint', title: 'J2 - ...' },
  { icon: 'app', count: '3', title: 'L...', menu: true },
];

const tasks2: Task[] = [
  { icon: 'folder', count: '2', title: 'Win...', menu: true },
  { icon: 'excel', count: '3', title: 'Mic...', menu: true },
  { icon: 'sync', title: '生化 - ...' },
  { icon: 'globe', title: '鼎新電...' },
  { icon: 'paint', title: 'J3 - 小...' },
  { icon: 'app', count: '3', title: 'Lea...', menu: true },
];

export default function App() {
  return (
    <div className="h-[2898px] w-[2048px] overflow-hidden bg-white font-['Liberation_Serif','Noto_Sans_CJK_TC',serif]">
      <header className="flex h-[134px] items-center pl-[104px] pt-[62px] font-['Liberation_Sans','Noto_Sans_CJK_TC',sans-serif]">
        <span className="w-[681px]">
          <span className="inline-block origin-left scale-x-90 font-['Open_Sans',sans-serif] text-[50px] font-semibold leading-none text-[#00007c]">3</span>
        </span>
        <h1 className="whitespace-nowrap text-[41.100px] leading-none text-black [-webkit-text-stroke:0.5px_black]">費用領料單及費用退料單</h1>
      </header>
      <div className="h-[107px] pl-[189px] font-['Liberation_Sans','Noto_Sans_CJK_TC',sans-serif] text-[41px] leading-none text-black">
        <p className="flex h-[49px] items-center whitespace-pre">3.單別<Red>(4)</Red><To />出現 F2開窗查詢 的視窗</p>
        <p className="flex h-[62px] items-center whitespace-pre tracking-[.450px]">選取:費用領料單"1100" or 費用退料單"1101" <Red>(5)</Red><To />確定<Red>(6)</Red></p>
      </div>

      <section className="relative ml-[185px] h-[941px] w-[1400px]">
        <MainWindow tasks={tasks1} time="07:48" />
        <LookupDialog
          className="left-[324px] top-[247px] h-[507px] w-[729px]"
          field="單別"
          fieldWidth="w-[205px]"
          columns={[{ title: '單別', w: 'w-[215px]' }, { title: '單據名稱', w: 'w-[273px]' }]}
          rows={typeRows}
          current={0}
          count="4"
          fieldCount="2"
          okMargin="ml-[188px]"
          cancelMargin="ml-[133px]"
          thumb="h-[175px]"
        />
        <Callouts
          boxes={[[209, 98, 238, 135], [337, 336, 860, 400], [511, 690, 645, 757]]}
          lines={[[240, 116, 266, 116], [773, 401, 782, 471], [607, 689, 653, 655]]}
          marks={[{ text: '4', x: 274, y: 124 }, { text: '5', x: 784, y: 494 }, { text: '6', x: 665, y: 653 }]}
        />
      </section>

      <div className="flex h-[164px] items-center whitespace-pre pl-[188px] pt-[22px] font-['Liberation_Sans','Noto_Sans_CJK_TC',sans-serif] text-[41px] leading-none text-black">
        <p className="flex items-center">4.部門代號<Red>(7)</Red><To />出現 F2開窗查詢 的視窗 選擇部門<Red>(8)</Red>確認<Red>(9)</Red></p>
      </div>

      <section className="relative ml-[185px] h-[943px] w-[1400px]">
        <MainWindow code="1100" number="100813001" codeName="費用領料單" tasks={tasks2} time="07:52" wide />
        <LookupDialog
          className="left-[339px] top-[252px] h-[509px] w-[852px]"
          field="部門代號"
          fieldWidth="w-[207px]"
          columns={[{ title: '部門代號', w: 'w-[121px]' }, { title: '部門名稱', w: 'w-[150px]' }, { title: '科目', w: 'w-[247px]' }]}
          rows={deptRows}
          current={13}
          mintFirst
          count="100"
          fieldCount="3"
          okMargin="ml-[229px]"
          cancelMargin="ml-[174px]"
          thumb="mt-[118px] h-[39px]"
        />
        <Callouts
          boxes={[[220, 208, 259, 239], [359, 438, 706, 478], [355, 486, 706, 545], [566, 708, 701, 759]]}
          lines={[[260, 220, 288, 220], [707, 458, 897, 467], [707, 511, 902, 468], [702, 722, 897, 653]]}
          marks={[{ text: '7', x: 297, y: 229 }, { text: '8', x: 909, y: 473 }, { text: '9', x: 914, y: 655 }]}
        />
      </section>
    </div>
  );
}
